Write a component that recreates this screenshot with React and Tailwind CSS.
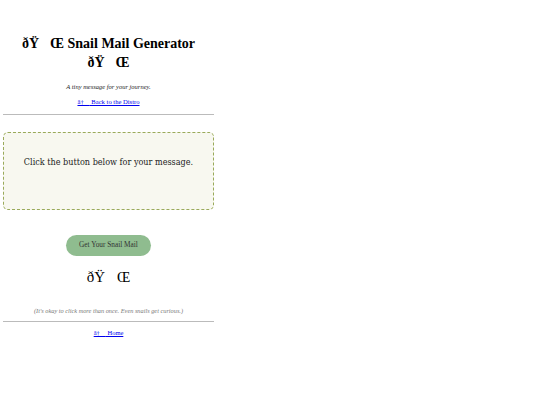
export default function App() {
  return (
    <div className="min-h-[405px] bg-white" style={{ fontFamily: '"Liberation Serif", serif' }}>
      <div className="w-[211px] ml-[3px] pt-[34px] text-center">
        <h1 className="text-[14px] leading-[19px] font-bold text-black">
          {'ðŸ\u0090Œ'} Snail Mail Generator {'ðŸ\u0090Œ'}
        </h1>
        <p className="mt-[10px] text-[6.5px] italic text-[#222]">A tiny message for your journey.</p>
        <p className="mt-[5px] text-[6.6px]">
          <a href="#" className="text-[#0000ee] underline">{'â†\u0090'} Back to the Distro</a>
        </p>
        <hr className="mt-[7px] border-t border-[#bbb]" />

        <div className="mt-[17px] h-[78px] flex items-center justify-center rounded-[5px] border border-dashed border-[#9aaa5a] bg-[#f8f8f0] pb-[16px]">
          <p className="text-[9px] text-[#222]" style={{ fontFamily: '"DejaVu Serif Condensed", "DejaVu Serif", serif' }}>
            Click the button below for your message.
          </p>
        </div>

        <div className="mt-[25px] flex justify-center">
          <button className="h-[21px] w-[85px] rounded-full bg-[#8fbc8f] text-[7.3px] text-[#333]">
            Get Your Snail Mail
          </button>
        </div>
        <p className="mt-[12px] text-[15px] leading-[19px] text-black">{'ðŸ\u0090Œ'}</p>

        <p className="mt-[19px] text-[6.3px] italic text-[#777]">
          (It's okay to click more than once. Even snails get curious.)
        </p>
        <hr className="mt-[6px] border-t border-[#bbb]" />
        <p className="mt-[6px] text-[6.5px]">
          <a href="#" className="text-[#0000ee] underline">{'â†\u0090'} Home</a>
        </p>
      </div>
    </div>
  );
}
